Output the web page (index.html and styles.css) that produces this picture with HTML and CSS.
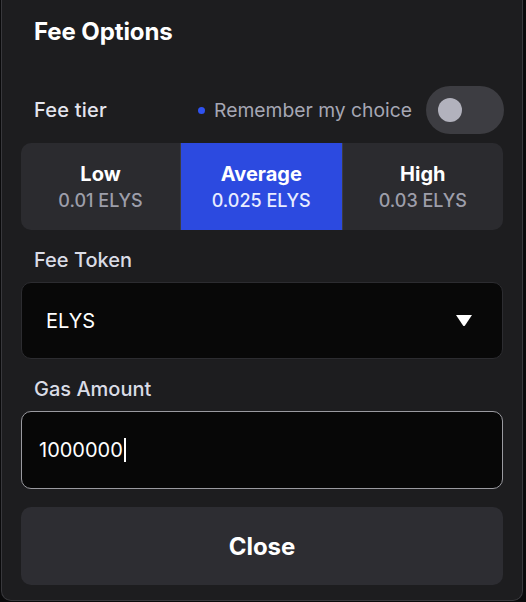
FILE: index.html
```html
<!DOCTYPE html>
<html>
<head>
<meta charset="utf-8">
<link rel="stylesheet" href="styles.css">
</head>
<body>
<div class="panel">
  <h1 class="title">Fee Options</h1>
  <div class="tier-row">
    <span class="label">Fee tier</span>
    <div class="remember">
      <span class="dot"></span>
      <span class="remember-text">Remember my choice</span>
      <span class="toggle"><span class="knob"></span></span>
    </div>
  </div>
  <div class="segments">
    <div class="seg">
      <span class="seg-name">Low</span>
      <span class="seg-val">0.01 ELYS</span>
    </div>
    <div class="seg active">
      <span class="seg-name">Average</span>
      <span class="seg-val">0.025 ELYS</span>
    </div>
    <div class="seg">
      <span class="seg-name">High</span>
      <span class="seg-val">0.03 ELYS</span>
    </div>
  </div>
  <div class="field-label">Fee Token</div>
  <div class="select">
    <span class="select-text">ELYS</span>
    <svg class="arrow" width="18" height="13" viewBox="0 0 18 13"><path d="M1 1 H17 L10 11.5 Q9 12.6 8 11.5 Z" fill="#ffffff"/></svg>
  </div>
  <div class="field-label">Gas Amount</div>
  <div class="input"><span class="input-text">1000000</span><span class="caret"></span></div>
  <div class="close-btn">Close</div>
</div>
</body>
</html>
```

FILE: styles.css
```css
html, body {
  margin: 0;
  padding: 0;
  background: #0a0a0b;
}
body {
  font-family: Inter, "Noto Sans", sans-serif;
  width: 526px;
  height: 602px;
  overflow: hidden;
}
.panel {
  box-sizing: border-box;
  margin-left: 1px;
  width: 522px;
  height: 601px;
  background: #1d1d1f;
  border: 1px solid #38383c;
  border-top: none;
  border-radius: 0 0 10px 10px;
  padding: 18px 19px 0 19px;
  display: flex;
  flex-direction: column;
}
.title {
  margin: 0 0 0 13px;
  font-size: 24px;
  font-weight: 700;
  line-height: 28px;
  color: #ffffff;
  letter-spacing: -0.1px;
}
.tier-row {
  margin-top: 40px;
  height: 48px;
  display: flex;
  align-items: center;
  justify-content: space-between;
}
.label {
  margin-left: 13px;
  font-size: 20px;
  font-weight: 500;
  color: #e4e5ee;
  letter-spacing: 0.2px;
}
.remember {
  display: flex;
  align-items: center;
  margin-right: -1px;
}
.dot {
  width: 7px;
  height: 7px;
  border-radius: 50%;
  background: #2f52f0;
  margin-right: 9px;
}
.remember-text {
  font-size: 19.3px;
  color: #a6a7b4;
  margin-right: 14px;
}
.toggle {
  width: 78px;
  height: 48px;
  border-radius: 24px;
  background: #3d3d42;
  display: flex;
  align-items: center;
  padding-left: 12px;
  box-sizing: border-box;
}
.knob {
  width: 24px;
  height: 24px;
  border-radius: 50%;
  background: #b2b2bd;
}
.segments {
  margin-top: 9px;
  height: 87px;
  border-radius: 10px;
  background: #2b2b2f;
  display: grid;
  grid-template-columns: 159px 1fr 1fr;
  overflow: hidden;
}
.seg {
  display: flex;
  flex-direction: column;
  align-items: center;
  justify-content: center;
  gap: 3px;
}
.seg + .seg {
  border-left: 1px solid #3c3c42;
}
.seg.active {
  background: #2c4ae0;
}
.seg-name {
  font-size: 20px;
  font-weight: 700;
  color: #ffffff;
  line-height: 26px;
}
.seg-val {
  font-size: 18px;
  font-weight: 500;
  color: #9d9eaa;
  line-height: 22px;
}
.seg.active .seg-val {
  color: #e8ecff;
}
.field-label {
  margin: 18px 0 10px 13px;
  font-size: 20px;
  font-weight: 500;
  line-height: 24px;
  color: #dadce6;
}
.select {
  box-sizing: border-box;
  height: 77px;
  background: #080808;
  border: 1px solid #2c2c30;
  border-radius: 10px;
  display: flex;
  align-items: center;
  justify-content: space-between;
  padding: 0 29px 0 24px;
}
.select-text {
  font-size: 20px;
  color: #ffffff;
}
.arrow {
  display: block;
}
.input {
  box-sizing: border-box;
  height: 78px;
  background: #070707;
  border: 1px solid #9a9aa0;
  border-radius: 10px;
  display: flex;
  align-items: center;
  padding-left: 17px;
}
.input-text {
  font-size: 20px;
  color: #ffffff;
}
.caret {
  width: 2px;
  height: 24px;
  background: #ffffff;
  margin-left: 1px;
}
.close-btn {
  margin-top: 18px;
  height: 78px;
  border-radius: 10px;
  background: #2d2d32;
  display: flex;
  align-items: center;
  justify-content: center;
  font-size: 24px;
  font-weight: 700;
  color: #ffffff;
}
```
